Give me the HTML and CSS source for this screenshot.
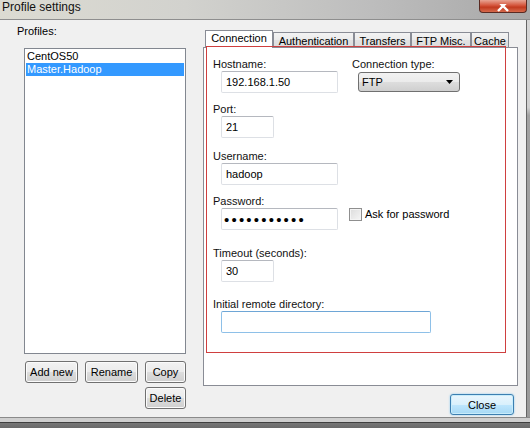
FILE: index.html
```html
<!DOCTYPE html>
<html lang="en">
<head>
    <meta charset="UTF-8">
    <meta name="viewport" content="width=device-width, initial-scale=1.0">
    <title>Profile settings</title>
    <link rel="stylesheet" href="styles.css">
</head>
<body>
    <div class="window">
        <!-- Title bar -->
        <div class="titlebar">
            <span class="title">Profile settings</span>
            <div class="close-x">
                <svg width="14" height="8" viewBox="0 0 14 8">
                    <path d="M2 -3 L7 2 L12 -3 M2 7 L7 2 L12 7" stroke="#ffffff" stroke-width="2.4" fill="none"/>
                </svg>
            </div>
        </div>

        <div class="frame">
            <div class="client">
                <!-- Profiles list -->
                <div class="profiles">
                    <div class="caption">Profiles:</div>
                    <ul class="listbox">
                        <li>CentOS50</li>
                        <li class="selected">Master.Hadoop</li>
                    </ul>
                    <div class="button-row">
                        <button class="btn btn-wide" type="button">Add new</button>
                        <button class="btn btn-wide" type="button">Rename</button>
                        <button class="btn btn-narrow" type="button">Copy</button>
                    </div>
                    <div class="button-row end">
                        <button class="btn btn-narrow" type="button">Delete</button>
                    </div>
                </div>

                <!-- Settings tabs -->
                <div class="settings">
                    <div class="tabs">
                        <div class="tab active tab-connection">Connection</div>
                        <div class="tab tab-auth">Authentication</div>
                        <div class="tab tab-transfers">Transfers</div>
                        <div class="tab tab-ftp">FTP Misc.</div>
                        <div class="tab tab-cache">Cache</div>
                    </div>
                    <div class="panel">
                        <div class="marker"></div>

                        <div class="row">
                            <div class="field host">
                                <label for="hostname">Hostname:</label>
                                <input class="textbox wide" id="hostname" type="text" value="192.168.1.50">
                            </div>
                            <div class="field">
                                <label>Connection type:</label>
                                <div class="select">
                                    <span>FTP</span>
                                    <svg width="7" height="4" viewBox="0 0 7 4"><path d="M0 0 H7 L3.5 4 Z" fill="#000"/></svg>
                                </div>
                            </div>
                        </div>

                        <div class="field gap-port">
                            <label for="port">Port:</label>
                            <input class="textbox short" id="port" type="text" value="21">
                        </div>

                        <div class="field gap-user">
                            <label for="username">Username:</label>
                            <input class="textbox wide" id="username" type="text" value="hadoop">
                        </div>

                        <div class="field gap-pass">
                            <label for="password">Password:</label>
                            <div class="row">
                                <input class="textbox wide password" id="password" type="password" value="hadoophadoo">
                                <div class="check">
                                    <span class="checkbox"></span>
                                    <span>Ask for password</span>
                                </div>
                            </div>
                        </div>

                        <div class="field gap-timeout">
                            <label for="timeout">Timeout (seconds):</label>
                            <input class="textbox short" id="timeout" type="text" value="30">
                        </div>

                        <div class="field gap-dir">
                            <label for="remotedir">Initial remote directory:</label>
                            <input class="textbox long focused" id="remotedir" type="text" value="">
                        </div>
                    </div>

                    <div class="footer">
                        <button class="btn btn-default" type="button">Close</button>
                    </div>
                </div>
            </div>
            <div class="edge-right"></div>
        </div>
        <div class="edge-bottom"></div>
    </div>
</body>
</html>
```

FILE: styles.css
```css
body {
    margin: 0;
    width: 530px;
    height: 428px;
    overflow: hidden;
    background-color: #f0f0f0;
    font-family: 'Liberation Sans', Arial, sans-serif;
    font-size: 11px;
    color: #000;
}
.window {
    display: flex;
    flex-direction: column;
    height: 428px;
}

/* Title bar */
.titlebar {
    height: 19px;
    display: flex;
    align-items: flex-start;
    border-bottom: 1px solid #8e8e8e;
    background: linear-gradient(90deg, #dcdbd2 0%, #d2d2ce 35%, #bdbdbd 70%, #a8a8a8 100%);
}
.title {
    font-size: 12px;
    line-height: 15px;
    padding-left: 2px;
    color: #111;
}
.close-x {
    margin-left: auto;
    margin-right: 3px;
    width: 46px;
    height: 12px;
    border: 1px solid #5a2a22;
    border-top: none;
    border-radius: 0 0 4px 4px;
    background: linear-gradient(#e8a493 0%, #d4553c 45%, #c23a1f 60%, #d66a4c 100%);
    display: flex;
    justify-content: center;
    align-items: flex-end;
}

/* Frame around the client area */
.frame {
    display: flex;
    height: 397px;
}
.client {
    width: 526px;
    display: flex;
    align-items: flex-start;
}
.edge-right {
    width: 3px;
    border-left: 1px solid #646464;
    background: linear-gradient(#d6d6d6 0%, #d0d0d0 22%, #a2a2a2 24%, #9a9a9a 100%);
}
.edge-bottom {
    height: 10px;
    border-top: 1px solid #8a8a8a;
    background: linear-gradient(#cfcfcf 0%, #cfcfcf 35%, #3f3f3f 36%, #3f3f3f 50%, #767676 51%, #6a6a6a 100%);
}

/* Profiles column */
.profiles {
    width: 169px;
    padding: 5px 0 0 17px;
}
.caption {
    line-height: 13px;
}
.listbox {
    list-style: none;
    margin: 10px 0 0 7px;
    padding: 1px;
    width: 162px;
    height: 306px;
    box-sizing: border-box;
    border: 1px solid #828790;
    background-color: #fff;
}
.listbox li {
    line-height: 13px;
    padding-left: 1px;
}
.listbox li.selected {
    background-color: #3399ff;
    color: #fff;
}
.button-row {
    display: flex;
    gap: 7px;
    margin: 7px 0 0 8px;
}
.button-row.end {
    justify-content: flex-end;
    margin-top: 4px;
}

/* Buttons */
.btn {
    font-family: 'Liberation Sans', Arial, sans-serif;
    font-size: 11px;
    color: #000;
    height: 22px;
    padding: 0;
    border: 1px solid #707070;
    border-radius: 3px;
    background: linear-gradient(#f2f2f2 0%, #ebebeb 50%, #dddddd 51%, #cfcfcf 100%);
    box-shadow: inset 0 0 0 1px #fbfbfb;
}
.btn-wide {
    width: 53px;
}
.btn-narrow {
    width: 41px;
}
.btn-default {
    width: 64px;
    height: 21px;
    border-color: #3c7fb1;
    background: linear-gradient(#eaf6fd 0%, #d9f0fc 50%, #bee6fd 51%, #a7d9f5 100%);
    box-shadow: inset 0 0 0 1px #c8ecfb, 0 0 2px #7ec4ee;
}

/* Settings column */
.settings {
    width: 315px;
    margin-left: 17px;
    padding-top: 10px;
}
.tabs {
    display: flex;
    align-items: flex-end;
    height: 17px;
    padding-left: 2px;
}
.tab {
    height: 15px;
    box-sizing: border-box;
    border: 1px solid #898c95;
    border-bottom: none;
    line-height: 13px;
    padding-top: 2px;
    text-align: center;
    background: linear-gradient(#f3f3f3 0%, #ebebeb 50%, #e2e2e2 51%, #dcdcdc 100%);
}
.tab.active {
    position: relative;
    z-index: 1;
    height: 18px;
    margin-bottom: -1px;
    padding-top: 1px;
    background: #fff;
}
.tab-connection { width: 68px; }
.tab-auth { width: 81px; }
.tab-transfers { width: 57px; }
.tab-ftp { width: 60px; }
.tab-cache { width: 38px; }

.panel {
    position: relative;
    height: 339px;
    box-sizing: border-box;
    border: 1px solid #898c95;
    background-color: #fff;
    padding: 10px 0 0 9px;
}
/* red highlight drawn over the tab page */
.marker {
    position: absolute;
    left: 2px;
    top: -2px;
    width: 298px;
    height: 305px;
    border: 1px solid #cf3f3f;
    z-index: 2;
}

.row {
    display: flex;
    align-items: flex-start;
}
.field label {
    display: block;
    line-height: 13px;
    color: #111;
}
.field.host {
    width: 139px;
}
.gap-port { margin-top: 10px; }
.gap-user { margin-top: 12px; }
.gap-pass { margin-top: 10px; }
.gap-timeout { margin-top: 17px; }
.gap-dir { margin-top: 16px; }

.textbox {
    display: block;
    box-sizing: border-box;
    height: 22px;
    margin: 0 0 0 8px;
    padding: 0 4px;
    border: 1px solid #dde0e5;
    border-top-color: #b5b8bf;
    border-radius: 2px;
    font-family: 'Liberation Sans', Arial, sans-serif;
    font-size: 11px;
    color: #000;
    background-color: #fff;
    outline: none;
}
.textbox.wide { width: 117px; }
.textbox.short { width: 53px; }
.textbox.long {
    width: 210px;
}
.textbox.focused {
    border-color: #8ec0e8;
    border-top-color: #6ea6d6;
}
.textbox.password {
    font-size: 15px;
    letter-spacing: 2.2px;
    padding-left: 2px;
}

.select {
    display: flex;
    align-items: center;
    justify-content: space-between;
    box-sizing: border-box;
    width: 102px;
    height: 20px;
    margin: 1px 0 0 6px;
    padding: 0 6px 0 3px;
    border: 1px solid #707070;
    border-radius: 3px;
    background: linear-gradient(#f2f2f2 0%, #ebebeb 50%, #dddddd 51%, #cfcfcf 100%);
}

.check {
    display: flex;
    align-items: flex-start;
    margin-left: 11px;
    line-height: 13px;
}
.checkbox {
    width: 13px;
    height: 13px;
    box-sizing: border-box;
    margin-right: 3px;
    border: 1px solid #8f8f8f;
    background: linear-gradient(135deg, #dcdcdc 0%, #f6f6f6 100%);
    box-shadow: inset 0 0 0 1px #f4f4f4;
}

.footer {
    display: flex;
    justify-content: flex-end;
    padding: 8px 4px 0 0;
}
```
